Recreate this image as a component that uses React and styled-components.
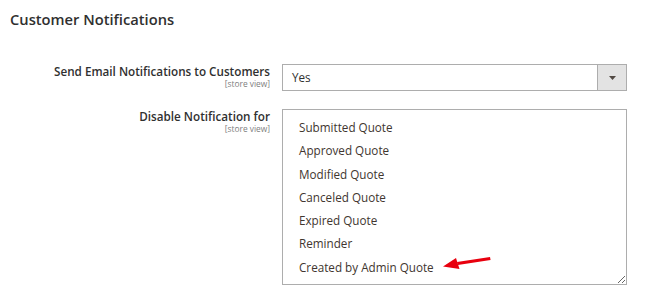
import React from "react";
import styled, { createGlobalStyle } from "styled-components";

const Global = createGlobalStyle`
  html, body { margin: 0; padding: 0; background: #fff; }
  body { font-family: "Open Sans", "Liberation Sans", sans-serif; color: #303030; }
`;

const Page = styled.div`
  width: 648px;
  height: 290px;
  overflow: hidden;
  box-sizing: border-box;
  padding: 9px 0 0 10px;
`;

const Title = styled.h2`
  margin: 0 0 35px;
  font-size: 14.7px;
  line-height: 20px;
  font-weight: 600;
  color: #303030;
`;

const Fields = styled.div`
  display: flex;
  flex-direction: column;
  gap: 18px;
`;

const Row = styled.div`
  display: grid;
  grid-template-columns: 260px 345px;
  column-gap: 12px;
  align-items: start;
`;

const Label = styled.div`
  text-align: right;
`;

const LabelText = styled.div`
  font-size: 11.7px;
  line-height: 14px;
  font-weight: 600;
  color: #303030;
`;

const Scope = styled.div`
  font-size: 8.4px;
  line-height: 11px;
  color: #808080;
`;

const Select = styled.div`
  display: flex;
  height: 27px;
  box-sizing: border-box;
  border: 1px solid #adadad;
  background: #fff;
`;

const SelectValue = styled.div`
  flex: 1;
  padding-left: 9px;
  font-size: 11.7px;
  line-height: 25px;
  color: #303030;
`;

const SelectButton = styled.div`
  width: 28px;
  border-left: 1px solid #adadad;
  background: #e3e3e3;
  display: flex;
  align-items: center;
  justify-content: center;
`;

const Multi = styled.div`
  position: relative;
  height: 176px;
  box-sizing: border-box;
  border: 1px solid #adadad;
  padding: 6px 16px;
  overflow: hidden;
  resize: vertical;
`;

const Option = styled.div`
  font-size: 11.7px;
  line-height: 23.3px;
  color: #41362f;
  white-space: nowrap;
`;

const Marker = styled.svg`
  position: absolute;
  left: 160px;
  top: 146px;
  overflow: visible;
`;

const options = [
  "Submitted Quote",
  "Approved Quote",
  "Modified Quote",
  "Canceled Quote",
  "Expired Quote",
  "Reminder",
  "Created by Admin Quote",
];

export default function App() {
  return (
    <>
      <Global />
      <Page>
        <Title>Customer Notifications</Title>
        <Fields>
          <Row>
            <Label>
              <LabelText>Send Email Notifications to Customers</LabelText>
              <Scope>[store view]</Scope>
            </Label>
            <Select>
              <SelectValue>Yes</SelectValue>
              <SelectButton>
                <svg width="7" height="4" viewBox="0 0 7 4">
                  <path d="M0 0 H7 L3.5 4 Z" fill="#514943" />
                </svg>
              </SelectButton>
            </Select>
          </Row>
          <Row>
            <Label>
              <LabelText>Disable Notification for</LabelText>
              <Scope>[store view]</Scope>
            </Label>
            <Multi>
              {options.map((o) => (
                <Option key={o}>{o}</Option>
              ))}
              <Marker width="50" height="14" viewBox="0 0 50 14">
                <path d="M14 6 L47 1 L47.6 4 L14.8 9 Z" fill="#e8000e" />
                <path d="M0 10.5 L13 2 L16.5 13 Z" fill="#e8000e" />
              </Marker>
            </Multi>
          </Row>
        </Fields>
      </Page>
    </>
  );
}
